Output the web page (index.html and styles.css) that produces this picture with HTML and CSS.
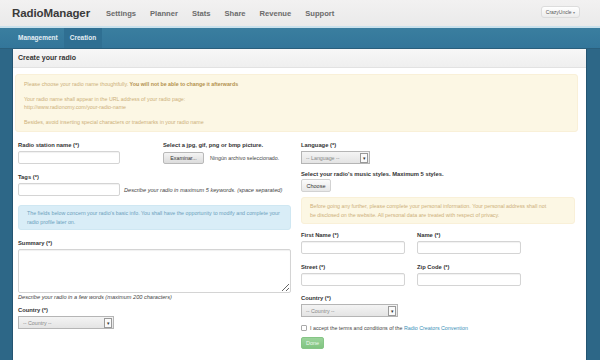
FILE: index.html
```html
<!DOCTYPE html>
<html lang="en">
<head>
    <meta charset="UTF-8">
    <meta name="viewport" content="width=device-width, initial-scale=1.0">
    <title>RadioManager - Create your radio</title>
    <link rel="stylesheet" href="styles.css">
</head>
<body>
    <header class="topbar">
        <div class="brand">RadioManager</div>
        <nav class="mainnav">
            <a href="#">Settings</a>
            <a href="#">Planner</a>
            <a href="#">Stats</a>
            <a href="#">Share</a>
            <a href="#">Revenue</a>
            <a href="#">Support</a>
        </nav>
        <button class="user-btn">CrazyUncle <span class="caret">▾</span></button>
    </header>

    <div class="subnav">
        <a href="#">Management</a>
        <a href="#" class="active">Creation</a>
    </div>

    <div class="page">
        <div class="panel">
            <div class="panel-head">Create your radio</div>
            <div class="panel-body">
                <div class="alert alert-warn">
                    <p>Please choose your radio name thoughtfully. <b>You will not be able to change it afterwards</b></p>
                    <p>Your radio name shall appear in the URL address of your radio page:<br>http://www.radionomy.com/your-radio-name</p>
                    <p>Besides, avoid inserting special characters or trademarks in your radio name</p>
                </div>

                <div class="cols">
                    <div class="col">
                        <div class="row">
                            <div class="field">
                                <label>Radio station name (*)</label>
                                <input type="text" class="input-sm">
                            </div>
                            <div class="field">
                                <label>Select a jpg, gif, png or bmp picture.</label>
                                <div class="file-row">
                                    <button class="file-btn">Examinar...</button>
                                    <span>Ningún archivo seleccionado.</span>
                                </div>
                            </div>
                        </div>

                        <div class="field tags-field">
                            <label>Tags (*)</label>
                            <div class="inline">
                                <input type="text" class="input-sm">
                                <span class="help">Describe your radio in maximum 5 keywords. (space separated)</span>
                            </div>
                        </div>

                        <div class="alert alert-info">
                            The fields below concern your radio's basic info. You shall have the opportunity to modify and complete your radio profile later on.
                        </div>

                        <div class="field summary-field">
                            <label>Summary (*)</label>
                            <textarea></textarea>
                            <span class="help">Describe your radio in a few words (maximum 200 characters)</span>
                        </div>

                        <div class="field country-field">
                            <label>Country (*)</label>
                            <div class="select select-left">
                                <span>-- Country --</span>
                                <span class="arrow">▾</span>
                            </div>
                        </div>
                    </div>

                    <div class="col">
                        <div class="field">
                            <label>Language (*)</label>
                            <div class="select select-lang">
                                <span>-- Language --</span>
                                <span class="arrow">▾</span>
                            </div>
                        </div>

                        <div class="field styles-field">
                            <label>Select your radio's music styles. Maximum 5 styles.</label>
                            <button class="btn">Choose</button>
                        </div>

                        <div class="alert alert-warn alert-small">
                            Before going any further, please complete your personal information. Your personal address shall not be disclosed on the website. All personal data are treated with respect of privacy.
                        </div>

                        <div class="pair pair-first">
                            <div class="field">
                                <label>First Name (*)</label>
                                <input type="text" class="input-md">
                            </div>
                            <div class="field">
                                <label>Name (*)</label>
                                <input type="text" class="input-md">
                            </div>
                        </div>

                        <div class="pair">
                            <div class="field">
                                <label>Street (*)</label>
                                <input type="text" class="input-md">
                            </div>
                            <div class="field">
                                <label>Zip Code (*)</label>
                                <input type="text" class="input-md">
                            </div>
                        </div>

                        <div class="field country-right">
                            <label>Country (*)</label>
                            <div class="select select-right">
                                <span>-- Country --</span>
                                <span class="arrow">▾</span>
                            </div>
                        </div>

                        <div class="terms">
                            <input type="checkbox">
                            <span>I accept the terms and conditions of the <a href="#">Radio Creators Convention</a></span>
                        </div>

                        <button class="btn-done">Done</button>
                    </div>
                </div>
            </div>
        </div>
    </div>
</body>
</html>
```

FILE: styles.css
```css
html, body {
    margin: 0;
    height: 100%;
}

body {
    font-family: 'Liberation Sans', Arial, sans-serif;
    background: #2d6787;
    color: #333;
    overflow: hidden;
}

a {
    text-decoration: none;
}

/* top bar */
.topbar {
    height: 26px;
    background: linear-gradient(to bottom, #f2f1f1, #eaeaea);
    border-bottom: 2px solid #c9e1ec;
    display: flex;
    align-items: center;
    padding: 0 20px 0 12px;
}

.brand {
    font-size: 11.5px;
    font-weight: bold;
    color: #3a3a3a;
    letter-spacing: -0.1px;
}

.mainnav {
    display: flex;
    gap: 14px;
    margin-left: 16px;
}

.mainnav a {
    font-size: 7.6px;
    font-weight: bold;
    color: #6b6b6b;
}

.user-btn {
    margin-left: auto;
    font-family: inherit;
    font-size: 5px;
    color: #555;
    background: linear-gradient(to bottom, #ffffff, #ececec);
    border: 1px solid #dcdcdc;
    border-radius: 3px;
    height: 12px;
    padding: 0 4px;
    margin-top: -2px;
}

.caret {
    font-size: 4px;
    color: #888;
}

/* sub navigation */
.subnav {
    height: 20px;
    background: linear-gradient(to bottom, #3a7e9f, #33769a);
    display: flex;
    padding-left: 12px;
    border-bottom: 1px solid #2a5f7c;
}

.subnav a {
    font-size: 6.5px;
    font-weight: bold;
    color: #e4eef4;
    padding: 0 6px;
    line-height: 20px;
}

.subnav a.active {
    background: #2f6f92;
}

/* page */
.page {
    padding: 0 13px 0 12px;
}

.panel {
    background: #fff;
    height: 320px;
    border-left: 1px solid #245471;
    border-right: 1px solid #245471;
}

.panel-head {
    height: 18px;
    line-height: 18px;
    background: linear-gradient(to bottom, #f7f7f7, #efefef);
    border-bottom: 1px solid #e2e2e2;
    font-size: 7px;
    font-weight: bold;
    color: #333;
    padding-left: 5px;
}

.panel-body {
    padding: 6px 8px 0 2px;
}

.alert {
    border-radius: 3px;
}

.alert p {
    margin: 0 0 6px;
}

.alert p:last-child {
    margin-bottom: 0;
}

.alert-warn {
    background: #fcf7e4;
    border: 1px solid #f9f0d8;
    color: #cdb07a;
    font-size: 5.3px;
    line-height: 8.5px;
    padding: 5px 8px;
}

.alert-warn b {
    color: #b3914c;
}

.alert-info {
    background: #d9edf7;
    border: 1px solid #cfe7f2;
    color: #6c9fbc;
    font-size: 5.3px;
    line-height: 8.5px;
    padding: 3px 8px;
    margin-top: 9px;
}

.alert-small {
    margin-top: 5px;
    padding: 4px 26px 4px 8px;
}

/* columns */
.cols {
    display: grid;
    grid-template-columns: 273px 274px;
    gap: 10px;
    padding-left: 3px;
    margin-top: 9px;
}

.field label {
    display: block;
    font-size: 5.8px;
    font-weight: bold;
    color: #333;
    line-height: 8px;
    margin-bottom: 2px;
}

.row {
    display: flex;
    gap: 43px;
}

input[type="text"], textarea {
    display: block;
    height: 13px;
    box-sizing: border-box;
    border: 1px solid #d4d4d4;
    border-radius: 2px;
    box-shadow: inset 0 1px 1px rgba(0, 0, 0, 0.06);
    background: #fff;
    margin: 0;
    padding: 0 3px;
}

.input-sm {
    width: 102px;
}

.input-md {
    width: 104px;
}

.file-row {
    display: flex;
    align-items: center;
    gap: 6px;
    height: 13px;
    font-size: 5.3px;
    color: #444;
}

.file-btn {
    font-family: inherit;
    font-size: 5.3px;
    color: #333;
    height: 12px;
    width: 41px;
    padding: 0;
    border: 1px solid #b9b9b9;
    border-radius: 2px;
    background: linear-gradient(to bottom, #f4f4f4, #dcdcdc);
}

.tags-field {
    margin-top: 9px;
}

.inline {
    display: flex;
    align-items: center;
    gap: 4px;
    height: 13px;
}

.help {
    font-size: 5.6px;
    font-style: italic;
    color: #444;
}

.summary-field {
    margin-top: 9px;
}

textarea {
    width: 273px;
    height: 44px;
    resize: both;
}

.summary-field .help {
    display: block;
    line-height: 8px;
}

.country-field {
    margin-top: 5px;
}

/* selects */
.select {
    display: flex;
    align-items: center;
    justify-content: space-between;
    height: 13px;
    box-sizing: border-box;
    border: 1px solid #b5b5b5;
    background: linear-gradient(to bottom, #f4f4f4, #e4e4e4);
    font-size: 5.3px;
    color: #888;
    padding: 0 1px 0 4px;
}

.select .arrow {
    width: 6px;
    height: 8px;
    border: 1px solid #999;
    background: #fafafa;
    font-size: 5px;
    line-height: 8px;
    text-align: center;
    color: #333;
}

.select-left {
    width: 96px;
}

.select-lang {
    width: 69px;
}

.select-right {
    width: 97px;
}

.styles-field {
    margin-top: 6px;
}

.btn {
    display: block;
    font-family: inherit;
    font-size: 5.5px;
    color: #333;
    height: 13px;
    width: 30px;
    padding: 0;
    border: 1px solid #d2d2d2;
    border-radius: 2px;
    background: linear-gradient(to bottom, #fbfbfb, #e8e8e8);
    margin-top: -1px;
}

.pair {
    display: flex;
    gap: 12px;
    margin-top: 9px;
}

.pair-first {
    margin-top: 7px;
}

.country-right {
    margin-top: 8px;
}

.terms {
    display: flex;
    align-items: center;
    gap: 3px;
    margin-top: 7px;
    font-size: 5.3px;
    color: #444;
    height: 8px;
}

.terms input {
    appearance: none;
    -webkit-appearance: none;
    width: 6px;
    height: 6px;
    margin: 0;
    border: 1px solid #aaa;
    border-radius: 1px;
    background: #fff;
}

.terms a {
    color: #3a8fb7;
}

.btn-done {
    display: block;
    margin-top: 5px;
    font-family: inherit;
    font-size: 5.5px;
    color: #eef8ee;
    height: 12px;
    width: 23px;
    padding: 0;
    border: 1px solid #86c586;
    border-radius: 2px;
    background: linear-gradient(to bottom, #9bd39b, #80c480);
}
```
